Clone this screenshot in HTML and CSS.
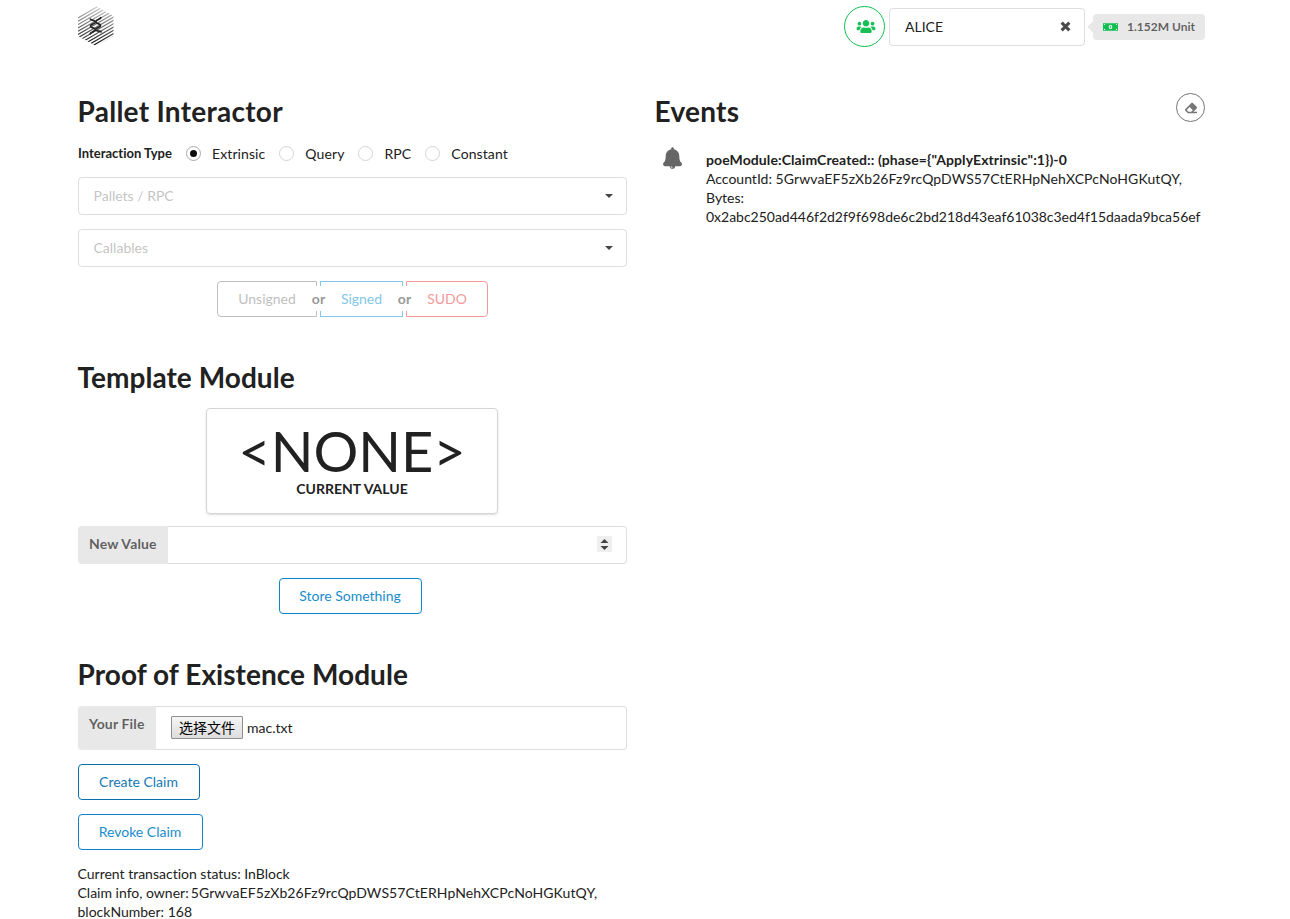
FILE: index.html
```
<!DOCTYPE html>
<html lang="en">
<head>
<meta charset="utf-8">
<title>Substrate Front End</title>
<link rel="stylesheet" href="styles.css">
</head>
<body>
<div class="container">
  <header class="topbar">
    <svg class="logo" viewBox="0 0 36 40">
      <defs>
        <clipPath id="hex"><path d="M18 0L35.500 10V30L18 40L0 30V10Z"/></clipPath>
        <linearGradient id="fade" x1="0" y1="0" x2="0" y2="40" gradientUnits="userSpaceOnUse"><stop offset="0" stop-color="#ccc"/><stop offset=".45" stop-color="#777"/><stop offset="1" stop-color="#111"/></linearGradient>
      </defs>
      <g clip-path="url(#hex)"><path stroke="url(#fade)" stroke-width="1.200" d="M0 12L36-9M0 15.300L36-5.700M0 18.600L36-2.400M0 21.900L36 .900M0 25.200L36 4.200M0 28.500L36 7.500M0 31.800L36 10.800M0 35.100L36 14.100M0 38.400L36 17.400M0 41.700L36 20.700M0 45L36 24M0 48.300L36 27.300M0 51.600L36 30.600M0 54.900L36 33.900"/></g>
      <path fill="none" stroke="#222" stroke-width="1.700" d="M12 12.500C13 15 15.500 13 17.500 16C19.500 18.500 22.500 17.500 22.500 19.500C22.500 21.500 19.500 20.500 17.500 23.500C15.500 27 12.500 25 12 28.500M23 11C22.500 14 19.500 12.500 17.500 16C15.500 19 12.500 18 12.500 20C12.500 22 15.500 21 17.500 23.500C19.500 26.500 22.500 24 23.500 26.500"/>
    </svg>
    <div class="account">
      <span class="users"><svg viewBox="0 0 640 512"><path d="M96 224c35.300 0 64-28.700 64-64s-28.700-64-64-64-64 28.700-64 64 28.700 64 64 64zm448 0c35.300 0 64-28.700 64-64s-28.700-64-64-64-64 28.700-64 64 28.700 64 64 64zm32 32h-64c-17.600 0-33.500 7.100-45.100 18.600 40.300 22.100 68.900 62 75.100 109.400h66c17.700 0 32-14.300 32-32v-32c0-35.300-28.700-64-64-64zm-256 0c61.900 0 112-50.100 112-112S381.900 32 320 32 208 82.100 208 144s50.100 112 112 112zm76.800 32h-8.300c-20.800 10-43.900 16-68.500 16s-47.600-6-68.500-16h-8.300C179.600 288 128 339.600 128 403.200V432c0 26.500 21.500 48 48 48h288c26.500 0 48-21.500 48-48v-28.800c0-63.600-51.600-115.200-115.200-115.200zm-223.700-13.400C161.500 263.100 145.600 256 128 256H64c-35.300 0-64 28.700-64 64v32c0 17.700 14.300 32 32 32h65.900c6.300-47.400 34.900-87.300 75.200-109.400z"/></svg></span>
      <div class="dropdown who"><span>ALICE</span><svg class="clear" viewBox="0 0 10 10"><path d="M1.500 1.500L8.500 8.500M8.500 1.500L1.500 8.500"/></svg></div>
      <div class="balance"><svg viewBox="0 0 16 10"><path fill="#0fbf50" d="M0 1H16V9H0Z"/><path fill="#e8e8e8" d="M1 3A1.500 1.500 0 0 0 2.500 1.800H1ZM15 3A1.500 1.500 0 0 1 13.500 1.800H15ZM1 7A1.500 1.500 0 0 1 2.500 8.200H1ZM15 7A1.500 1.500 0 0 0 13.500 8.200H15Z"/><ellipse cx="8" cy="5" rx="1.900" ry="2.500" fill="#e8e8e8"/><path stroke="#0fbf50" stroke-width=".8" d="M8 3.600V6.400"/></svg>1.152M Unit</div>
    </div>
  </header>
  <main class="columns">
    <div class="column">
      <section class="interactor">
        <h1 class="wide">Pallet Interactor</h1>
        <div class="types">
          <label class="caption">Interaction Type</label>
          <label class="radio"><i class="dot on"></i>Extrinsic</label>
          <label class="radio"><i class="dot"></i>Query</label>
          <label class="radio"><i class="dot"></i>RPC</label>
          <label class="radio"><i class="dot"></i>Constant</label>
        </div>
        <div class="dropdown field"><span>Pallets / RPC</span><i class="caret"></i></div>
        <div class="dropdown field"><span>Callables</span><i class="caret"></i></div>
        <div class="choices">
          <span class="choice unsigned">Unsigned</span><span class="or"><b>or</b></span><span class="choice signed">Signed</span><span class="or"><b>or</b></span><span class="choice sudo">SUDO</span>
        </div>
      </section>
      <section class="template">
        <h1>Template Module</h1>
        <div class="card"><div class="value">&lt;NONE&gt;</div><div class="label">Current Value</div></div>
        <div class="input"><div class="tag new">New Value</div><div class="box number"><svg class="spin" viewBox="0 0 15 16"><path d="M0 0H15V16H0Z" fill="#efefef"/><path d="M3.500 7L7.500 3L11.500 7ZM3.500 10L7.500 14L11.500 10Z" fill="#444"/></svg></div></div>
        <div class="center"><span class="button store">Store Something</span></div>
      </section>
      <section class="proof">
        <h1>Proof of Existence Module</h1>
        <div class="input file"><div class="tag your">Your File</div><div class="box"><span class="choose">选择文件</span>mac.txt</div></div>
        <div class="action"><span class="button create">Create Claim</span></div>
        <div class="action"><span class="button revoke">Revoke Claim</span></div>
        <div class="status">Current transaction status: InBlock<br>Claim info, owner: <span class="address">5GrwvaEF5zXb26Fz9rcQpDWS57CtERHpNehXCPcNoHGKutQY,</span><br>blockNumber: 168</div>
      </section>
    </div>
    <div class="column">
      <div class="events-head"><h1 class="wide">Events</h1><span class="erase"><svg viewBox="0 0 512 512"><path d="M497.941 273.941c18.745-18.745 18.745-49.137 0-67.882l-160-160c-18.745-18.745-49.136-18.746-67.883 0l-256 256c-18.745 18.745-18.745 49.137 0 67.882l96 96A48.004 48.004 0 0 0 144 480h356c6.627 0 12-5.373 12-12v-40c0-6.627-5.373-12-12-12H355.883l142.058-142.059zm-302.627-62.627l137.373 137.373L265.373 416H150.628l-80-80 124.686-124.686z"/></svg></span></div>
      <div class="event">
        <svg class="bell" viewBox="0 0 448 512"><path d="M433.884 366.059C411.634 343.809 384 316.118 384 208c0-79.394-57.831-145.269-133.663-157.830A31.845 31.845 0 0 0 256 32c0-17.673-14.327-32-32-32s-32 14.327-32 32c0 6.750 2.095 13.008 5.663 18.170C121.831 62.731 64 128.606 64 208c0 108.118-27.643 135.809-49.893 158.059C-16.042 396.208 5.325 448 48.048 448H160c0 35.346 28.654 64 64 64s64-28.654 64-64h111.943c42.638 0 64.151-51.731 33.941-81.941zM224 472a8 8 0 0 1 0 16c-22.056 0-40-17.944-40-40h16c0 13.234 10.766 24 24 24z"/></svg>
        <div class="content"><b>poeModule:ClaimCreated:: (phase={"ApplyExtrinsic":1})-0</b><br>AccountId: <span class="address">5GrwvaEF5zXb26Fz9rcQpDWS57CtERHpNehXCPcNoHGKutQY,</span><br>Bytes:<br><span class="hash">0x2abc250ad446f2d2f9f698de6c2bd218d43eaf61038c3ed4f15daada9bca56ef</span></div>
      </div>
    </div>
  </main>
</div>
</body>
</html>
```
FILE: styles.css
```
* { box-sizing: border-box; }
html { overflow: hidden; }
body { margin: 0; height: 919px; overflow: hidden; background: #fff; color: #212121; font: 14px/19px Lato, "Noto Sans CJK SC", sans-serif; font-variant-ligatures: none; }
.container { width: 1127px; margin-left: 78px; }
.topbar { height: 54px; display: flex; justify-content: space-between; align-items: flex-start; padding-top: 6px; }
.logo { width: 36px; height: 40px; }
.account { display: flex; align-items: center; height: 41px; }
.users { width: 41px; height: 41px; border: 1px solid #0fbf50; border-radius: 50%; display: flex; align-items: center; justify-content: center; padding-left: 3px; margin-right: 4px; }
.users svg { width: 20px; height: 15px; fill: #18bf55; }
.dropdown { height: 38px; border: 1px solid rgba(34,36,38,.15); border-radius: 4px; display: flex; align-items: center; justify-content: space-between; padding: 0 13px 0 15px; }
.who { width: 196px; }
.clear { width: 11px; height: 11px; fill: none; stroke: #4a4a4a; stroke-width: 2.8; }
.balance { position: relative; margin-left: 8px; width: 112px; height: 26px; border-radius: 4px; background: #e8e8e8; color: rgba(0,0,0,.6); font-size: 12px; font-weight: 700; line-height: 26px; display: flex; align-items: center; padding-left: 10px; white-space: nowrap; }
.balance::before { content: ""; position: absolute; left: -4px; top: 9px; width: 8px; height: 8px; background: #e8e8e8; transform: rotate(45deg); }
.balance svg { width: 15px; height: 10px; margin-right: 9px; position: relative; }
.columns { display: grid; grid-template-columns: 549px 550px; column-gap: 28px; padding-top: 39px; }
h1 { margin: 0 0 0 -.5px; font-size: 28px; line-height: 36px; font-weight: 700; letter-spacing: .05px; }
.wide { letter-spacing: .27px; }
.types { display: flex; align-items: center; height: 19px; margin: 15px 0 14px; }
.caption { font-size: 13px; font-weight: 700; width: 108px; padding-bottom: 1px; white-space: nowrap; }
.radio { display: flex; align-items: center; margin-right: 14px; letter-spacing: .1px; }
.dot { width: 15px; height: 15px; border: 1px solid #d4d4d5; border-radius: 50%; margin-right: 11px; display: flex; align-items: center; justify-content: center; }
.dot.on { border-color: #ababab; }
.dot.on::after { content: ""; width: 7px; height: 7px; border-radius: 50%; background: rgba(0,0,0,.95); }
.field { color: rgba(191,191,191,.95); margin-bottom: 14px; }
.field span { margin: -1px 0 1px -.5px; }
.caret { border: 4.500px solid transparent; border-top-color: #444; border-bottom: 0; }
.choices { display: flex; justify-content: center; height: 36px; }
.choice { border: 1px solid; text-align: center; line-height: 34px; }
.unsigned { width: 100px; color: #bfbfbf; border-radius: 4px 0 0 4px; }
.signed { width: 83px; color: #83c7e9; }
.sudo { width: 82px; color: #f49a9a; border-radius: 0 4px 4px 0; }
.or { width: 3px; position: relative; }
.or b { position: absolute; left: -9px; top: 5px; width: 21px; height: 25px; line-height: 25px; text-align: center; background: #fff; color: #999; }
.template, .proof { margin-top: 43px; }
.template h1, .proof h1 { line-height: 34px; }
.card { width: 292px; height: 106px; margin: 14px 0 12px 128px; border: 1px solid #d4d4d5; border-radius: 4px; box-shadow: 0 1px 2px rgba(34,36,38,.15); text-align: center; padding-top: 14px; }
.value { font-size: 56px; line-height: 56px; }
.label { font-weight: 700; text-transform: uppercase; }
.input { display: flex; height: 38px; }
.tag { background: #e8e8e8; color: rgba(0,0,0,.6); font-weight: 700; padding: 8px 0 0 11px; border-radius: 4px 0 0 4px; white-space: nowrap; letter-spacing: .15px; }
.new { width: 90px; }
.your { width: 78px; }
.box { flex: 1; border: 1px solid rgba(34,36,38,.15); border-left: 0; border-radius: 0 4px 4px 0; display: flex; align-items: center; padding: 0 14px 2px 15px; }
.number { justify-content: flex-end; }
.spin { width: 15px; height: 16px; }
.center { display: flex; justify-content: center; margin: 14px 5px 0 0; }
.button { display: block; height: 36px; border: 1px solid #0d84c8; border-radius: 4px; color: #1a8ccb; text-align: center; line-height: 34px; }
.store { width: 143px; }
.file { height: 44px; margin-top: 15px; }
.choose { width: 72px; height: 23px; border: 1px solid #8e8e8e; background: linear-gradient(#f5f5f5, #ddd); color: #000; text-align: center; line-height: 21px; margin-right: 4px; border-radius: 1px; white-space: nowrap; }
.action { margin-top: 14px; }
.create { width: 122px; border-color: #0870ad; color: #1678b4; padding-right: 1px; }
.revoke { width: 125px; padding-right: 1px; }
.status { margin: 14px 0 0 -.5px; white-space: nowrap; }
.address { letter-spacing: .09px; }
.status .address { margin-left: -1.500px; }
.hash { letter-spacing: -.015px; }
b { letter-spacing: .09px; }
.events-head { display: flex; justify-content: space-between; }
.erase { width: 29px; height: 29px; border: 1px solid #767676; border-radius: 50%; display: flex; align-items: center; justify-content: center; }
.erase svg { width: 12px; height: 12px; fill: #767676; }
.event { display: flex; margin-top: 18px; }
.bell { width: 19px; height: 22px; margin-left: 8px; fill: #666; }
.content { margin: 3px 0 0 24px; white-space: nowrap; }
```
